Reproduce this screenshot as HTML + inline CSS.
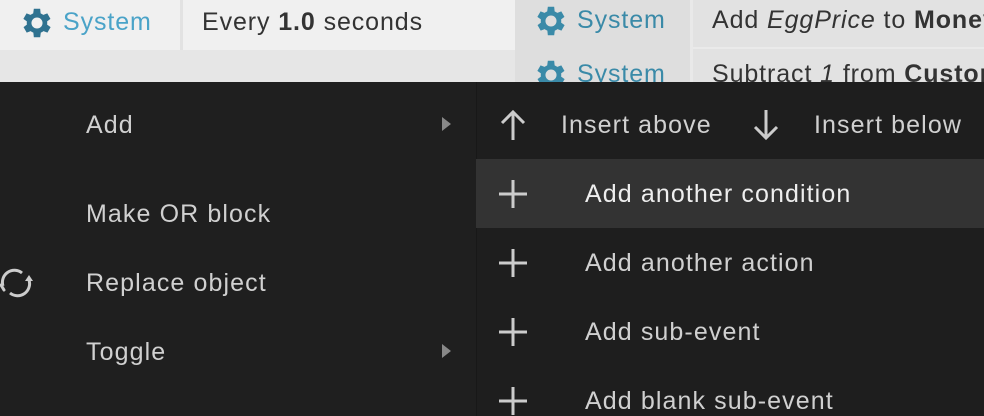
<!DOCTYPE html>
<html><head><meta charset="utf-8"><style>
*{margin:0;padding:0;box-sizing:border-box}
body{width:984px;height:416px;overflow:hidden;position:relative;background:#e6e6e6;font-family:"Liberation Sans",sans-serif}
.abs{position:absolute}
.t{position:absolute;white-space:nowrap;font-size:25px;letter-spacing:0.9px}
.m{color:#d0d0d0;font-size:25px;letter-spacing:1.1px;position:absolute;white-space:nowrap}
.clip{position:absolute;left:693px;top:0;width:291px;height:82px;overflow:hidden}
</style></head><body>
<div class="abs" style="left:0;top:0;width:515px;height:50px;background:#f0f0f0"></div>
<div class="abs" style="left:180px;top:0;width:3px;height:50px;background:#e2e2e2"></div>
<div class="abs" style="left:515px;top:0;width:469px;height:82px;background:#dedede"></div>
<div class="abs" style="left:690px;top:0;width:3px;height:82px;background:#e9e9e9"></div>
<div class="abs" style="left:693px;top:0;width:291px;height:82px;background:#e2e2e2"></div>
<div class="abs" style="left:693px;top:47px;width:291px;height:2px;background:#eaeaea"></div>

<svg class="abs" style="left:18px;top:4px" width="38" height="38" viewBox="0 0 24 24"><path fill="#2f7290" d="M19.4 13a7.5 7.5 0 0 0 0-2l2.1-1.6-2-3.5-2.5 1a7.4 7.4 0 0 0-1.7-1L15 3h-4l-.4 2.9a7.4 7.4 0 0 0-1.7 1l-2.5-1-2 3.5L6.6 11a7.5 7.5 0 0 0 0 2l-2.1 1.6 2 3.5 2.5-1a7.4 7.4 0 0 0 1.7 1L11 21h4l.4-2.9a7.4 7.4 0 0 0 1.7-1l2.5 1 2-3.5zM13 15.5a3.5 3.5 0 1 1 0-7 3.5 3.5 0 0 1 0 7z" transform="translate(-1 0)"/></svg>
<div class="t" style="left:63px;top:8px;color:#4aa3c8">System</div>
<div class="t" style="left:202px;top:8px;color:#333">Every <b>1.0</b> seconds</div>

<svg class="abs" style="left:532px;top:2px" width="38" height="38" viewBox="0 0 24 24"><path fill="#3a8aa8" d="M19.4 13a7.5 7.5 0 0 0 0-2l2.1-1.6-2-3.5-2.5 1a7.4 7.4 0 0 0-1.7-1L15 3h-4l-.4 2.9a7.4 7.4 0 0 0-1.7 1l-2.5-1-2 3.5L6.6 11a7.5 7.5 0 0 0 0 2l-2.1 1.6 2 3.5 2.5-1a7.4 7.4 0 0 0 1.7 1L11 21h4l.4-2.9a7.4 7.4 0 0 0 1.7-1l2.5 1 2-3.5zM13 15.5a3.5 3.5 0 1 1 0-7 3.5 3.5 0 0 1 0 7z" transform="translate(-1 0)"/></svg>
<div class="t" style="left:577px;top:6px;color:#3a8aa8">System</div>
<svg class="abs" style="left:532px;top:56px" width="38" height="38" viewBox="0 0 24 24"><path fill="#3a8aa8" d="M19.4 13a7.5 7.5 0 0 0 0-2l2.1-1.6-2-3.5-2.5 1a7.4 7.4 0 0 0-1.7-1L15 3h-4l-.4 2.9a7.4 7.4 0 0 0-1.7 1l-2.5-1-2 3.5L6.6 11a7.5 7.5 0 0 0 0 2l-2.1 1.6 2 3.5 2.5-1a7.4 7.4 0 0 0 1.7 1L11 21h4l.4-2.9a7.4 7.4 0 0 0 1.7-1l2.5 1 2-3.5zM13 15.5a3.5 3.5 0 1 1 0-7 3.5 3.5 0 0 1 0 7z" transform="translate(-1 0)"/></svg>
<div class="t" style="left:577px;top:60px;color:#3a8aa8">System</div>
<div class="clip">
<div class="t" style="left:19px;top:6px;color:#333">Add <i>EggPrice</i> to <b>Money</b></div>
<div class="t" style="left:19px;top:60px;color:#333">Subtract <i>1</i> from <b>Customers</b></div>
</div>

<div class="abs" style="left:0;top:82px;width:476px;height:334px;background:#1f1f1f"></div>
<div class="abs" style="left:476px;top:82px;width:508px;height:334px;background:#1e1e1e;border-left:1px solid #181818"></div>
<div class="abs" style="left:476px;top:159px;width:508px;height:69px;background:#333"></div>

<div class="m" style="left:86px;top:111px">Add</div>
<div class="abs" style="left:442px;top:117px;width:0;height:0;border-left:9px solid #888;border-top:7px solid transparent;border-bottom:7px solid transparent"></div>
<div class="m" style="left:86px;top:200px">Make OR block</div>
<svg class="abs" style="left:0;top:266px" width="36" height="34" viewBox="0 0 36 34" fill="none" stroke="#ccc" stroke-width="3"><path d="M3 20a12 12 0 0 1 19-13"/><path d="M29 14a12 12 0 0 1-19 13"/><path d="M25 15l4-6 4 6z" fill="#ccc" stroke="none"/><path d="M1 19l3 5" stroke-linecap="round"/></svg>
<div class="m" style="left:86px;top:269px">Replace object</div>
<div class="m" style="left:86px;top:338px">Toggle</div>
<div class="abs" style="left:442px;top:344px;width:0;height:0;border-left:9px solid #888;border-top:7px solid transparent;border-bottom:7px solid transparent"></div>

<svg class="abs" style="left:496px;top:108px" width="34" height="34" viewBox="0 0 34 34" fill="none" stroke="#ccc" stroke-width="3"><path d="M17 32V4M6 15L17 4l11 11"/></svg>
<div class="m" style="left:561px;top:111px">Insert above</div>
<svg class="abs" style="left:749px;top:108px" width="34" height="34" viewBox="0 0 34 34" fill="none" stroke="#ccc" stroke-width="3"><path d="M17 2v28M6 19l11 11 11-11"/></svg>
<div class="m" style="left:814px;top:111px">Insert below</div>

<svg class="abs" style="left:498px;top:179px" width="30" height="30" fill="none" stroke="#ccc" stroke-width="3"><path d="M15 1v28M1 15h28"/></svg>
<div class="m" style="left:585px;top:180px;color:#eee">Add another condition</div>
<svg class="abs" style="left:498px;top:248px" width="30" height="30" fill="none" stroke="#ccc" stroke-width="3"><path d="M15 1v28M1 15h28"/></svg>
<div class="m" style="left:585px;top:249px">Add another action</div>
<svg class="abs" style="left:498px;top:317px" width="30" height="30" fill="none" stroke="#ccc" stroke-width="3"><path d="M15 1v28M1 15h28"/></svg>
<div class="m" style="left:585px;top:318px">Add sub-event</div>
<svg class="abs" style="left:498px;top:386px" width="30" height="30" fill="none" stroke="#ccc" stroke-width="3"><path d="M15 1v28M1 15h28"/></svg>
<div class="m" style="left:585px;top:387px">Add blank sub-event</div>
</body></html>
